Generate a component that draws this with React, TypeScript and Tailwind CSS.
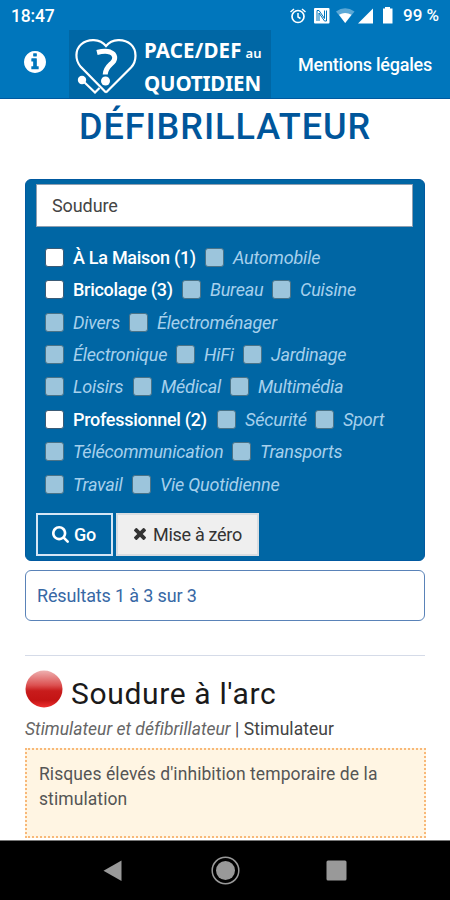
import clsx from "clsx";

interface Category {
    label: string;
    count?: number;
    width: string;
}

const categoryRows: Category[][] = [
    [{ label: "À La Maison", count: 1, width: "w-[123px]" }, { label: "Automobile", width: "w-[87px]" }],
    [{ label: "Bricolage", count: 3, width: "w-[100px]" }, { label: "Bureau", width: "w-[53px]" }, { label: "Cuisine", width: "w-[56px]" }],
    [{ label: "Divers", width: "w-[47px]" }, { label: "Électroménager", width: "w-[120px]" }],
    [{ label: "Électronique", width: "w-[94px]" }, { label: "HiFi", width: "w-[30px]" }, { label: "Jardinage", width: "w-[75px]" }],
    [{ label: "Loisirs", width: "w-[51px]" }, { label: "Médical", width: "w-[60px]" }, { label: "Multimédia", width: "w-[85px]" }],
    [{ label: "Professionnel", count: 2, width: "w-[135px]" }, { label: "Sécurité", width: "w-[61px]" }, { label: "Sport", width: "w-[41px]" }],
    [{ label: "Télécommunication", width: "w-[150px]" }, { label: "Transports", width: "w-[82px]" }],
    [{ label: "Travail", width: "w-[50px]" }, { label: "Vie Quotidienne", width: "w-[120px]" }],
];

const InfoIcon = () => (
    <svg viewBox="128 128 1536 1536" className="h-[22px] w-[22px]" fill="currentColor">
        <path d="M1152 1376v-160q0-14-9-23t-23-9h-96v-512q0-14-9-23t-23-9h-320q-14 0-23 9t-9 23v160q0 14 9 23t23 9h96v320h-96q-14 0-23 9t-9 23v160q0 14 9 23t23 9h448q14 0 23-9t9-23zm-128-896v-160q0-14-9-23t-23-9h-192q-14 0-23 9t-9 23v160q0 14 9 23t23 9h192q14 0 23-9t9-23zm640 416q0 209-103 385.5t-279.5 279.5-385.5 103-385.5-103-279.5-279.5-103-385.5 103-385.5 279.5-279.5 385.5-103 385.5 103 279.5 279.5 103 385.5z" />
    </svg>
);

const SearchIcon = () => (
    <svg viewBox="64 128 1664 1664" className="h-[17px] w-[17px]" fill="currentColor">
        <path d="M1216 832q0-185-131.5-316.5t-316.5-131.5-316.5 131.5-131.5 316.5 131.5 316.5 316.5 131.5 316.5-131.5 131.5-316.5zm512 832q0 52-38 90t-90 38q-54 0-90-38l-343-342q-179 124-399 124-143 0-273.5-55.5t-225-150-150-225-55.5-273.5 55.5-273.5 150-225 225-150 273.5-55.5 273.5 55.5 225 150 150 225 55.5 273.5q0 220-124 399l343 343q37 37 37 90z" />
    </svg>
);

const TimesIcon = () => (
    <svg viewBox="302 366 1188 1188" className="h-3 w-3" fill="currentColor">
        <path d="M1490 1322q0 40-28 68l-136 136q-28 28-68 28t-68-28l-294-294-294 294q-28 28-68 28t-68-28l-136-136q-28-28-28-68t28-68l294-294-294-294q-28-28-28-68t28-68l136-136q28-28 68-28t68 28l294 294 294-294q28-28 68-28t68 28l136 136q28 28 28 68t-28 68l-294 294 294 294q28 28 28 68z" />
    </svg>
);

const StatusBar = () => (
    <div className="flex h-[30px] items-center pr-[10px] pl-[11px] pt-[2px]">
        <span className="text-[17.5px] font-medium tracking-[-0.2px]">18:47</span>
        <svg width="106" height="20" viewBox="290 6 106 20" className="ml-auto mr-[8px]" fill="none" stroke="white">
            {/* alarm */}
            <circle cx="299" cy="16.500" r="6" strokeWidth="1.700" />
            <path d="M299 13v4l2.500 1.500M291.500 12l3.500-3M306.500 12l-3.500-3" strokeWidth="1.500" />
            {/* nfc */}
            <rect x="315" y="8" width="15.500" height="15.500" rx="1" fill="white" stroke="none" />
            <path d="M318 21V10.500h2l5.500 8V10.500M327.500 10.500V21h-2l-5.500-8V21" stroke="#0076bc" strokeWidth="1" />
            {/* wifi */}
            <path d="M337 11.500Q346 5 355.500 11.500L346.200 23Z" fill="#5ba8d6" stroke="none" />
            <path d="M340 14.700Q346 11.500 352.500 14.700L346.200 23Z" fill="white" stroke="none" />
            {/* signal */}
            <path d="M374 8.500V23.500H359Z" fill="white" stroke="none" />
            {/* battery */}
            <path d="M384 8.500h2V7h5v1.500h2.500V23.500H384Z" fill="white" stroke="none" />
        </svg>
        <span className="w-[37px] whitespace-nowrap text-[17px] font-medium">99 %</span>
    </div>
);

const Logo = () => (
    <div className="flex h-[68px] w-[202px] bg-[#0067a5] pl-[5px]">
        <svg width="66" height="66" viewBox="74 30 66 66" fill="none" stroke="white" strokeWidth="2.200">
            <path d="M106 92.500L131 67.500C137 61 137 50 131 44.500C124 38.500 112 38.500 106 46C100 38.500 88 38.500 81 44.500C75 50 75 60 80.500 66.500L106 92.500" />
            <path d="M82 80L95 92.500L99.500 88" />
            <circle cx="82" cy="80" r="4.200" fill="white" stroke="none" />
            <path d="M97 52.500Q105 50.500 110 52C115.500 54 116 59 112.500 62.500C109 66 105.500 68 105.200 74.500" strokeWidth="5" />
            <circle cx="105.500" cy="81" r="4.500" fill="white" stroke="none" />
        </svg>
        <div className="ml-[4px] pt-[5px] font-['Noto_Sans'] text-[20.5px] leading-[31px] font-bold whitespace-nowrap">
            <p className="tracking-[0.15px]">PACE/DEF<span className="ml-[4px] text-[13px] font-semibold">au</span></p>
            <p className="-mt-[1px] tracking-[-0.15px]">QUOTIDIEN</p>
        </div>
    </div>
);

const CategoryItem: React.FC<{ category: Category }> = ({ category }) => {
    const enabled = category.count !== undefined;

    return (
        <label className="flex items-center">
            <span
                className={clsx(
                    "mr-[9px] h-[19px] w-[19px] shrink-0 rounded-[3px] border",
                    enabled ? "border-[#3a5a75] bg-white" : "border-[#4a7388] bg-[#9cc5dc]"
                )}
            />
            <span className={clsx("mr-[9px] whitespace-nowrap", category.width, enabled ? "font-medium tracking-[-0.28px] text-white" : "tracking-[-0.2px] text-[#a6d0ec] italic")}>
                {category.label}{enabled && ` (${category.count})`}
            </span>
        </label>
    );
};

const SearchPanel = () => (
    <section className="h-[382px] rounded-[6px] border border-[#0059a0] bg-[#0066a4] px-[10px] pt-[4px]">
        <input
            className="block h-[43px] w-[377px] border border-[#8f9fb0] bg-white px-[15px] text-[18px] tracking-[-0.1px] text-[#444] outline-none"
            defaultValue="Soudure"
        />
        <div className="mt-[14px] pl-[9px] text-[18px]">
            {categoryRows.map((row) => (
                <div key={row[0].label} className="flex h-[32.45px] items-center">
                    {row.map((category) => (
                        <CategoryItem key={category.label} category={category} />
                    ))}
                </div>
            ))}
        </div>
        <div className="mt-[12px] flex gap-[3px] text-[18px]">
            <button className="flex h-[43px] w-[77px] items-center gap-[5px] border-2 border-[#d5e6f5] pl-[14px] font-medium tracking-[-0.3px]">
                <SearchIcon />
                Go
            </button>
            <button className="flex h-[43px] w-[143px] items-center gap-[7px] border-2 border-[#d9dde1] bg-[#efefef] pl-[16px] tracking-[-0.3px] whitespace-nowrap text-[#333]">
                <TimesIcon />
                Mise à zéro
            </button>
        </div>
    </section>
);

const AndroidNav = () => (
    <nav className="h-[60px] shrink-0 border-t border-[#777] bg-black">
        <svg width="450" height="59" viewBox="0 841 450 59" fill="#999">
            <path d="M121.500 860.500V881L103.500 870.700Z" />
            <circle cx="225.500" cy="870.500" r="9.500" />
            <circle cx="225.500" cy="870.500" r="13.300" fill="none" stroke="#999" strokeWidth="1.500" />
            <rect x="326.500" y="860.500" width="20" height="20" rx="1.500" />
        </svg>
    </nav>
);

export default function App() {
    return (
        <div className="flex h-[900px] w-[450px] flex-col overflow-hidden bg-white font-[Roboto,sans-serif]">
            <header className="h-[99px] shrink-0 border-b border-[#0059a0] bg-[#0076bc] text-white">
                <StatusBar />
                <div className="flex">
                    <span className="ml-6 mt-[21px] mr-[23px]"><InfoIcon /></span>
                    <Logo />
                    <a className="mt-[21px] ml-[27px] text-[18px] font-medium tracking-[-0.22px] whitespace-nowrap">Mentions légales</a>
                </div>
            </header>
            <main className="flex-1 overflow-hidden px-[25px]">
                <h1 className="mt-[6px] h-[74px] text-center text-[36px] leading-[44px] font-medium tracking-[0.95px] text-[#00569b]">DÉFIBRILLATEUR</h1>
                <div className="text-white">
                    <SearchPanel />
                </div>
                <p className="mt-[9px] h-[51px] rounded-[6px] border border-[#5a83b8] pl-[11px] text-[18px] leading-[49px] tracking-[-0.15px] text-[#3768a5]">
                    Résultats 1 à 3 sur 3
                </p>
                <hr className="mt-[34px] border-[#d5dbe8]" />
                <article>
                    <h2 className="mt-[14px] flex h-[40px] items-start text-[30px] leading-[48px] tracking-[0.65px] text-[#1a1a1a]">
                        <svg width="39" height="39" viewBox="0 0 39 39" className="mr-[7px] shrink-0">
                            <defs>
                                <linearGradient id="ball" x1="0" y1="0" x2="0" y2="1">
                                    <stop offset="0" stopColor="#eeb0b0" />
                                    <stop offset="0.400" stopColor="#dc5050" />
                                    <stop offset="0.550" stopColor="#c81c1c" />
                                    <stop offset="0.800" stopColor="#c41414" />
                                    <stop offset="1" stopColor="#ee3030" />
                                </linearGradient>
                            </defs>
                            <circle cx="19" cy="19" r="18.500" fill="url(#ball)" />
                        </svg>
                        Soudure à l'arc
                    </h2>
                    <p className="mt-[7px] text-[17.5px] leading-[24px] tracking-[0.05px] whitespace-nowrap text-[#444]">
                        <em className="tracking-[0.01px] text-[#666]">Stimulateur et défibrillateur</em> | Stimulateur
                    </p>
                    <div className="mt-[7px] h-[90px] w-[401px] border-2 border-dotted border-[#f8b878] bg-[#fff5e3] px-[12px] pt-[12px] text-[17.5px] leading-[25px] tracking-[0.08px] text-[#555]">
                        Risques élevés d'inhibition temporaire de la stimulation
                    </div>
                </article>
            </main>
            <AndroidNav />
        </div>
    );
}
